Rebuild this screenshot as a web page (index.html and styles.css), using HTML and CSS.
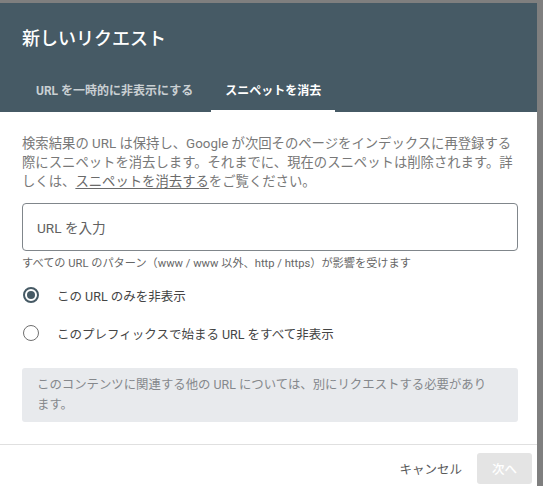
FILE: index.html
```html
<!DOCTYPE html>
<html lang="ja">
<head>
<meta charset="utf-8">
<title>新しいリクエスト</title>
<link rel="stylesheet" href="styles.css">
</head>
<body>
<div class="dialog">
  <header class="dlg-header">
    <h1 class="dlg-title">新しいリクエスト</h1>
    <nav class="tabs">
      <span class="tab">URL を一時的に非表示にする</span>
      <span class="tab active">スニペットを消去</span>
    </nav>
  </header>
  <main class="dlg-body">
    <p class="desc">検索結果の URL は保持し、Google が次回そのページをインデックスに再登録する際にスニペットを消去します。それまでに、現在のスニペットは削除されます。詳しくは、<a class="link" href="#">スニペットを消去する</a>をご覧ください。</p>
    <div class="field"><span class="placeholder">URL を入力</span></div>
    <p class="helper">すべての URL のパターン（www / www 以外、http / https）が影響を受けます</p>
    <div class="options">
      <div class="option"><span class="radio checked"><span class="dot"></span></span><span class="label">この URL のみを非表示</span></div>
      <div class="option"><span class="radio"></span><span class="label">このプレフィックスで始まる URL をすべて非表示</span></div>
    </div>
    <div class="note">このコンテンツに関連する他の URL については、別にリクエストする必要があります。</div>
  </main>
  <footer class="dlg-footer">
    <span class="btn cancel">キャンセル</span>
    <span class="btn next">次へ</span>
  </footer>
</div>
</body>
</html>
```

FILE: styles.css
```css
html, body {
  margin: 0;
  padding: 0;
  height: 100%;
}
body {
  background: #7f7f7f;
  font-family: Roboto, "Noto Sans CJK JP", sans-serif;
  overflow: hidden;
}
.dialog {
  margin-top: 3px;
  width: 537px;
  height: 483px;
  background: #ffffff;
  display: flex;
  flex-direction: column;
}
.dlg-header {
  background: #465a65;
  padding: 24px 0 0 22px;
  height: 109px;
  box-sizing: border-box;
  display: flex;
  flex-direction: column;
}
.dlg-title {
  margin: 0;
  font-size: 18px;
  line-height: 24px;
  font-weight: 500;
  color: #ffffff;
}
.tabs {
  margin-top: 17px;
  display: flex;
  gap: 4px;
}
.tab {
  height: 44px;
  box-sizing: border-box;
  padding: 0 14px;
  display: flex;
  align-items: center;
  font-size: 12px;
  font-weight: 700;
  color: rgba(255, 255, 255, 0.72);
  border-bottom: 2px solid transparent;
}
.tab.active {
  color: #ffffff;
  border-bottom-color: #ffffff;
}
.dlg-body {
  padding: 22px 19px 22px 22px;
  border-bottom: 1px solid #e0e0e0;
}
.desc {
  margin: 0;
  font-size: 13.35px;
  line-height: 19px;
  color: #787878;
}
.link {
  color: #6a6a6a;
  text-decoration: underline;
  text-underline-offset: 2px;
}
.field {
  margin-top: 12px;
  height: 48px;
  box-sizing: border-box;
  border: 1px solid #80868b;
  border-radius: 4px;
  display: flex;
  align-items: center;
  padding-left: 14px;
}
.placeholder {
  font-size: 13.6px;
  color: #616161;
}
.helper {
  margin: 6px 0 0;
  font-size: 11.2px;
  line-height: 14px;
  color: #666666;
}
.options {
  margin-top: 5px;
  display: flex;
  flex-direction: column;
}
.option {
  height: 38px;
  display: flex;
  align-items: center;
  gap: 18px;
  padding-left: 1px;
}
.radio {
  width: 16px;
  height: 16px;
  box-sizing: border-box;
  border: 1.5px solid #6f6f6f;
  border-radius: 50%;
  display: grid;
  place-items: center;
}
.radio.checked {
  border: 2px solid #465a65;
}
.dot {
  width: 8px;
  height: 8px;
  border-radius: 50%;
  background: #465a65;
}
.label {
  font-size: 12.5px;
  color: #444444;
}
.note {
  margin-top: 16px;
  background: #e8eaed;
  border-radius: 3px;
  padding: 7px 26px 7px 15px;
  font-size: 12.4px;
  line-height: 20px;
  color: #85888c;
}
.dlg-footer {
  display: flex;
  justify-content: flex-end;
  align-items: flex-start;
  padding: 8px 5px 0 0;
  gap: 1px;
}
.btn {
  height: 31px;
  display: flex;
  align-items: center;
  font-size: 12.5px;
  border-radius: 3px;
}
.cancel {
  padding: 0 14px;
  color: #5a5a5a;
}
.next {
  padding: 0 15px;
  background: #e4e4e4;
  color: #ffffff;
  font-weight: 500;
}
```
